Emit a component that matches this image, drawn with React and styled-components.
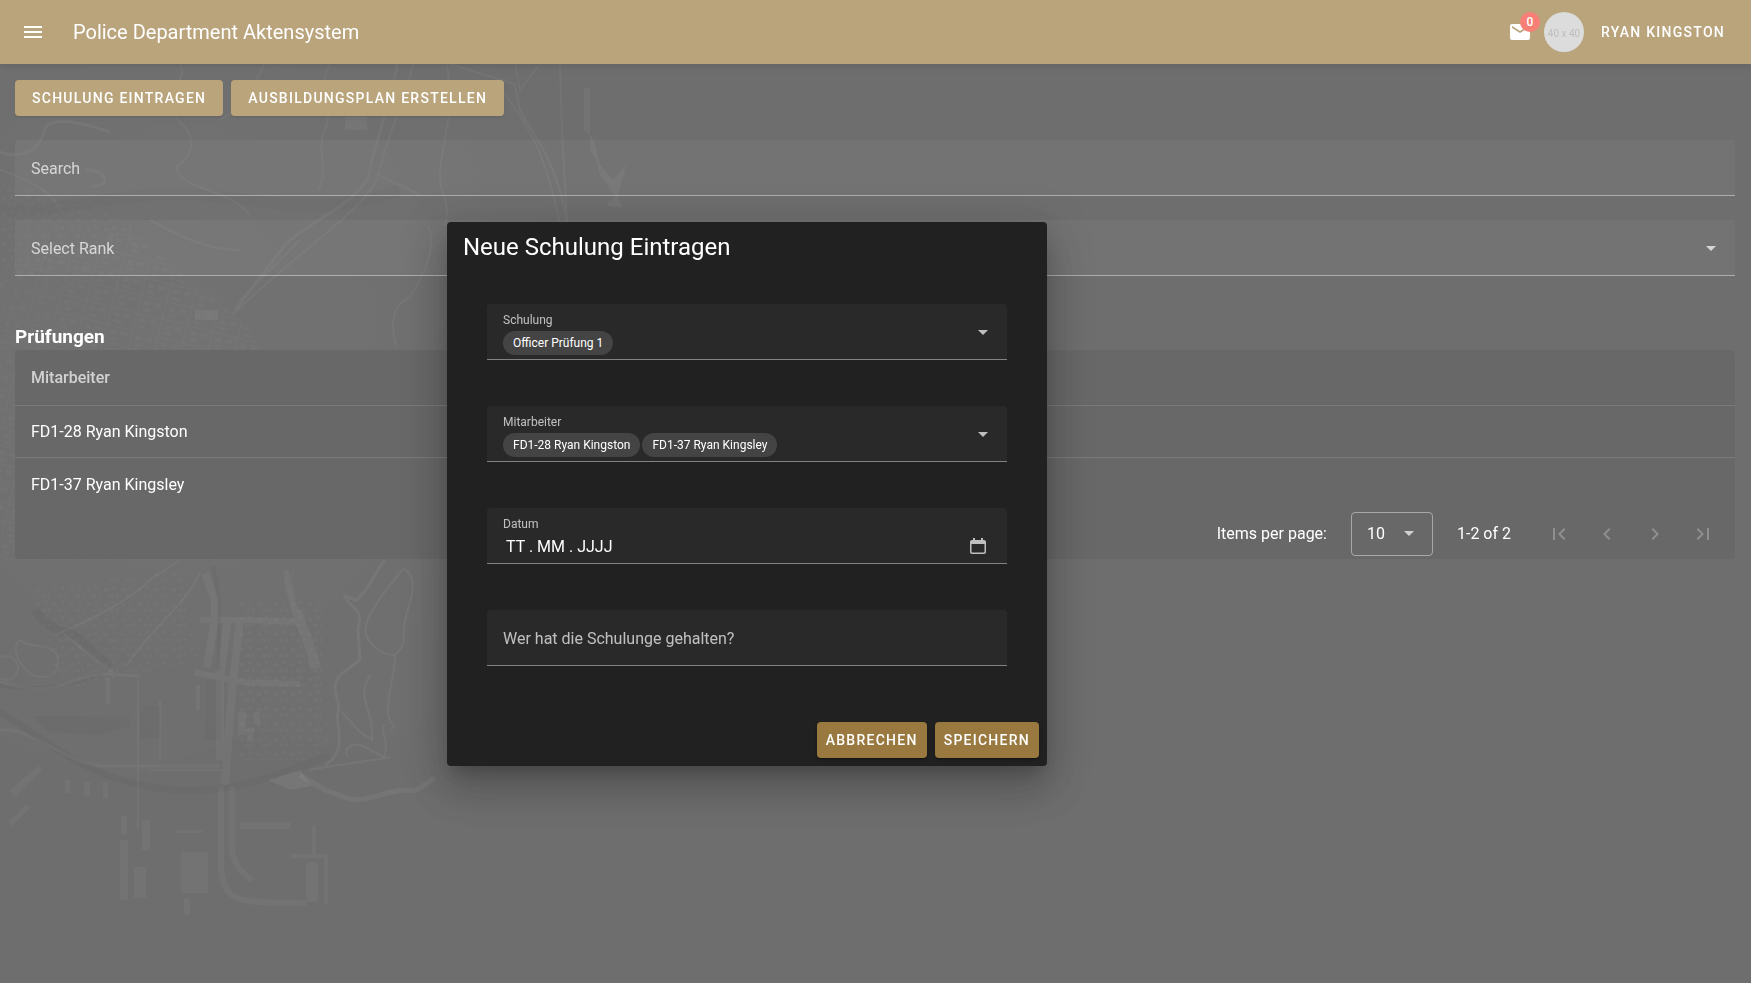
import React, { useState } from "react";
import styled, { createGlobalStyle, css } from "styled-components";

const icons = {
  menu: "M3 6H21V8H3V6M3 11H21V13H3V11M3 16H21V18H3V16Z",
  email:
    "M20 8L12 13L4 8V6L12 11L20 6M20 4H4C2.89 4 2 4.89 2 6V18A2 2 0 0 0 4 20H20A2 2 0 0 0 22 18V6C22 4.89 21.1 4 20 4Z",
  down: "M7 10L12 15L17 10H7Z",
  first:
    "M18.41 16.59L13.82 12L18.41 7.41L17 6L11 12L17 18L18.41 16.59M6 6H8V18H6V6Z",
  prev: "M15.41 16.58L10.83 12L15.41 7.41L14 6L8 12L14 18L15.41 16.58Z",
  next: "M8.59 16.58L13.17 12L8.59 7.41L10 6L16 12L10 18L8.59 16.58Z",
  last: "M5.59 7.41L10.18 12L5.59 16.59L7 18L13 12L7 6L5.59 7.41M16 6H18V18H16V6Z",
  calendar:
    "M7 4H9V6H15V4H17V6H18C19.1 6 20 6.9 20 8V18C20 19.1 19.1 20 18 20H6C4.9 20 4 19.1 4 18V8C4 6.9 4.9 6 6 6H7V4M5.5 10V18C5.5 18.3 5.7 18.5 6 18.5H18C18.3 18.5 18.5 18.3 18.5 18V10H5.5Z",
};

const Icon = ({ name }) => (
  <Svg viewBox="0 0 24 24" aria-hidden="true">
    <path d={icons[name]} fillRule="evenodd" />
  </Svg>
);

const CityMap = () => (
  <MapLayer viewBox="0 0 700 983" aria-hidden="true">
    <defs>
      <pattern
        id="blocks"
        width="26"
        height="18"
        patternUnits="userSpaceOnUse"
        patternTransform="rotate(14)"
      >
        <path d="M0 0H26M0 0V18" stroke="#fff" strokeWidth="2" opacity=".6" />
        <path d="M5 5H11V9H5ZM15 4H22V8H15ZM6 12H13V15H6Z" fill="#fff" opacity=".5" />
      </pattern>
      <pattern id="houses" width="17" height="15" patternUnits="userSpaceOnUse">
        <path d="M2 3H6V6H2ZM10 1H13V4H10ZM7 9H12V12H7ZM14 8H16V12H14Z" fill="#fff" />
      </pattern>
      <radialGradient id="fade" cx="0.3" cy="0.4" r="0.7">
        <stop offset="0" stopColor="#fff" stopOpacity=".03" />
        <stop offset="1" stopColor="#fff" stopOpacity="0" />
      </radialGradient>
    </defs>
    <path d="M0 64H590L620 190L520 225L440 330L400 500L440 560L430 770L260 730L120 780L0 740Z" fill="url(#fade)" />
    <path d="M0 270L130 230L250 330L260 350L200 560L0 560Z" fill="url(#blocks)" opacity=".04" />
    <path d="M0 180L90 200L140 230L0 275ZM30 590L180 570L200 660L60 690Z" fill="url(#houses)" opacity=".02" />
    <path d="M240 600H320L330 760H240Z" fill="url(#houses)" opacity=".025" />

    {/* rivers and shadows */}
    <g fill="none" stroke="#000" opacity=".12">
      <path d="M0 712C40 735 80 775 150 787S260 780 330 756" strokeWidth="7" />
      <path d="M36 610C44 630 70 632 78 638L110 668" strokeWidth="9" />
      <path d="M0 686C40 690 60 690 102 674" strokeWidth="4" />
      <path d="M213 566L219 600V670M290 570L300 610" strokeWidth="4" />
      <path d="M0 210C60 215 110 190 200 195S300 220 400 190" strokeWidth="12" opacity=".5" />
    </g>
    <path d="M32 716H130V726L100 735L48 732ZM140 706H160V738H140ZM205 680H222V740H205Z" fill="#000" opacity=".09" />

    {/* roads */}
    <g fill="none" stroke="#fff" opacity=".04">
      <path d="M205 573L215 600V618L207 668M228 618L220 680V760M240 620L232 690L225 785" strokeWidth="8" />
      <path d="M200 620H250L305 622M195 672L240 682L300 684" strokeWidth="6" />
      <path d="M288 570C292 610 310 640 316 668" strokeWidth="10" />
      <path d="M0 682C60 700 70 676 105 674L140 676M64 634L114 674M0 730C30 726 60 760 100 766H220" strokeWidth="3" />
      <path d="M57 634C90 620 130 600 150 580L180 560M126 666C150 630 190 600 200 572" strokeWidth="2" />
      <path d="M221 786V870C226 905 240 902 306 903M232 786V850C236 870 246 876 252 880" strokeWidth="6" />
      <path d="M138 680V830M160 700V760M150 770H226" strokeWidth="2" />
      <path d="M20 640C30 650 60 640 58 664C56 680 36 680 26 670S12 645 20 640Z" strokeWidth="2" />
      <circle cx="6" cy="668" r="12" strokeWidth="2" />
      <path d="M0 152C20 160 40 150 44 132S80 122 110 132M85 170C110 170 110 188 92 186" strokeWidth="3" />
      <path d="M398 60C390 110 375 140 370 170S310 220 285 245L235 310" strokeWidth="3" />
      <path d="M415 60C400 110 385 145 378 175S300 250 232 315" strokeWidth="2" />
      <path d="M446 60C456 110 442 145 440 170S452 200 445 225" strokeWidth="2" />
      <path d="M450 64L515 84L520 110C530 130 560 165 567 225M502 90C530 130 545 150 560 225" strokeWidth="2" />
      <path d="M560 64L562 130L567 225M515 64L520 90L540 64" strokeWidth="2" />
      <path d="M180 64C190 80 160 95 170 110S195 130 190 150S170 160 180 175S230 190 250 215" strokeWidth="2" />
      <path d="M265 64C250 90 240 110 220 120M330 64C315 90 335 110 325 130S330 170 318 190M375 173L420 195" strokeWidth="2" />
      <path d="M427 225C440 240 420 290 405 300S392 330 396 345M240 300L300 240" strokeWidth="2" />
      <path d="M150 220C170 230 200 250 240 250M0 170C30 180 50 190 60 210" strokeWidth="2" />
    </g>

    {/* golf course paths and the shore line */}
    <g fill="none" stroke="#fff" opacity=".05">
      <path d="M385 560C372 575 370 590 356 600L345 596C350 610 364 605 358 630L360 660L340 675C328 690 342 700 338 712S350 750 325 765" strokeWidth="3" />
      <path d="M404 568C420 580 410 600 405 620S410 640 395 655C380 655 362 640 366 625S385 590 404 568Z" strokeWidth="2" />
      <path d="M395 655C395 675 388 690 388 710S400 722 390 730M370 675C355 700 375 710 372 740L358 730L342 712" strokeWidth="2" />
      <path d="M348 758C340 745 360 740 370 750L384 757C390 740 380 735 384 725" strokeWidth="2" />
      <path d="M310 770C330 765 380 760 390 757" strokeWidth="2" />
      <path d="M300 775L325 790C340 795 350 802 365 799S395 788 415 791L435 778" strokeWidth="5" />
    </g>
    <path d="M268 780L300 770L312 786L290 790Z" fill="#fff" opacity=".06" />

    {/* docks and warehouses */}
    <g fill="#fff" opacity=".04">
      <path d="M121 816H127V834H121ZM120 840H128V900H120ZM134 867H146V898H134ZM142 820H150V850H142Z" />
      <path d="M181 852H208V893H181ZM184 898H190V915H184ZM176 830H202V833H176Z" />
      <path d="M240 822H290V829H240ZM312 825H316V854H312ZM290 854H328V904H324V858H290ZM306 862H318V902H306Z" />
      <path d="M106 678H110V704H106ZM196 685H200V710H196ZM238 712H246V735H238ZM247 728H254V742H247ZM254 712H260V724H254Z" />
      <path d="M10 790L38 766L42 770L14 798ZM8 822L26 804L30 808L12 826ZM65 780H70V793H65ZM84 782H90V796H84ZM103 782H108V798H103Z" />
      <path d="M345 114H367V130H345ZM195 310H218V320H195ZM584 88H590V150L600 165L594 140L584 130Z" />
      <path d="M590 130L600 165L613 180L626 165L618 195L622 208L606 205L615 196L600 175Z" />
    </g>
  </MapLayer>
);

const App = () => {
  const [search, setSearch] = useState("");
  const [rank, setRank] = useState("");
  const [trainer, setTrainer] = useState("");
  const [date, setDate] = useState("TT . MM . JJJJ");

  return (
    <Page>
      <GlobalStyle />
      <CityMap />
      <AppBar>
        <IconButton type="button" aria-label="Menu">
          <Icon name="menu" />
        </IconButton>
        <AppTitle>Police Department Aktensystem</AppTitle>
        <Mail type="button" aria-label="Mail">
          <Icon name="email" />
          <Badge>0</Badge>
        </Mail>
        <Avatar>40 x 40</Avatar>
        <UserButton type="button">Ryan Kingston</UserButton>
      </AppBar>

      <Main>
        <Actions>
          <Button type="button">Schulung eintragen</Button>
          <Button type="button">Ausbildungsplan erstellen</Button>
        </Actions>
        <Filters>
          <Field>
            <Label htmlFor="search">Search</Label>
            <Input
              id="search"
              value={search}
              onChange={(e) => setSearch(e.target.value)}
            />
          </Field>
          <Field>
            <Label htmlFor="rank">Select Rank</Label>
            <Select
              id="rank"
              value={rank}
              onChange={(e) => setRank(e.target.value)}
            >
              <option value=""></option>
            </Select>
            <Arrow>
              <Icon name="down" />
            </Arrow>
          </Field>
        </Filters>

        <Heading>Prüfungen</Heading>
        <TableCard>
          <Table>
            <thead>
              <tr>
                <th>Mitarbeiter</th>
              </tr>
            </thead>
            <tbody>
              <tr>
                <td>FD1-28 Ryan Kingston</td>
              </tr>
              <tr>
                <td>FD1-37 Ryan Kingsley</td>
              </tr>
            </tbody>
          </Table>
          <Footer>
            <label htmlFor="perPage">Items per page:</label>
            <PerPage>
              <select id="perPage" defaultValue="10">
                <option>10</option>
              </select>
              <Arrow $compact>
                <Icon name="down" />
              </Arrow>
            </PerPage>
            <Range>1-2 of 2</Range>
            {["first", "prev", "next", "last"].map((name) => (
              <PageButton type="button" disabled aria-label={name} key={name}>
                <Icon name={name} />
              </PageButton>
            ))}
          </Footer>
        </TableCard>
      </Main>

      <Overlay>
        <Dialog role="dialog" aria-labelledby="dialogTitle">
          <DialogTitle id="dialogTitle">Neue Schulung Eintragen</DialogTitle>
          <DialogBody>
            <Field>
              <Label htmlFor="training" $floating>
                Schulung
              </Label>
              <Chips>
                <Chip>Officer Prüfung 1</Chip>
              </Chips>
              <Select id="training" $hidden />
              <Arrow>
                <Icon name="down" />
              </Arrow>
            </Field>
            <Field>
              <Label htmlFor="employees" $floating>
                Mitarbeiter
              </Label>
              <Chips>
                <Chip>FD1-28 Ryan Kingston</Chip>
                <Chip>FD1-37 Ryan Kingsley</Chip>
              </Chips>
              <Select id="employees" $hidden />
              <Arrow>
                <Icon name="down" />
              </Arrow>
            </Field>
            <Field>
              <Label htmlFor="date" $floating>
                Datum
              </Label>
              <Input
                id="date"
                $date
                value={date}
                onChange={(e) => setDate(e.target.value)}
              />
              <DateButton type="button" aria-label="Kalender">
                <Icon name="calendar" />
              </DateButton>
            </Field>
            <Field>
              <Label htmlFor="trainer">Wer hat die Schulunge gehalten?</Label>
              <Input
                id="trainer"
                value={trainer}
                onChange={(e) => setTrainer(e.target.value)}
              />
            </Field>
          </DialogBody>
          <DialogActions>
            <Button type="button" $small>
              Abbrechen
            </Button>
            <Button type="button" $small>
              Speichern
            </Button>
          </DialogActions>
        </Dialog>
      </Overlay>
    </Page>
  );
};

const GlobalStyle = createGlobalStyle`
  * {
    box-sizing: border-box;
  }
  body {
    margin: 0;
    background: #2a2a2a;
    color: #fff;
    font: 16px/24px Roboto, sans-serif;
  }
  button, input, select {
    font: inherit;
    color: inherit;
    border: none;
    background: none;
    outline: none;
    margin: 0;
    padding: 0;
  }
`;

const Page = styled.div`
  position: relative;
  min-height: 100vh;
  overflow: hidden;
`;

const MapLayer = styled.svg`
  position: absolute;
  top: 0;
  left: 0;
  width: 700px;
  height: 983px;
`;

const Svg = styled.svg`
  display: block;
  width: 24px;
  height: 24px;
  fill: currentColor;
`;

const AppBar = styled.header`
  position: relative;
  display: flex;
  align-items: center;
  height: 64px;
  padding: 0 9px;
  background: #99793f;
  box-shadow: 0 2px 4px -1px rgba(0, 0, 0, 0.2), 0 4px 5px rgba(0, 0, 0, 0.14),
    0 1px 10px rgba(0, 0, 0, 0.12);
`;

const IconButton = styled.button`
  display: flex;
  align-items: center;
  justify-content: center;
  width: 48px;
  height: 48px;
`;

const AppTitle = styled.div`
  flex: 1;
  margin-left: 16px;
  font-size: 20px;
`;

const Mail = styled.button`
  position: relative;
  margin-right: 12px;
`;

const Badge = styled.span`
  position: absolute;
  left: 12px;
  bottom: 12px;
  min-width: 20px;
  height: 20px;
  border-radius: 10px;
  background: #f44336;
  font-size: 12px;
  font-weight: 500;
  line-height: 20px;
`;

const Avatar = styled.div`
  width: 40px;
  height: 40px;
  border-radius: 50%;
  background: #ccc;
  color: #a0a0a0;
  font-size: 10px;
  line-height: 44px;
  text-align: center;
`;

const Button = styled.button`
  height: 36px;
  padding: 0 ${({ $small }) => ($small ? "9px" : "17px")};
  border-radius: 4px;
  background: #99793f;
  box-shadow: 0 3px 1px -2px rgba(0, 0, 0, 0.2), 0 2px 2px rgba(0, 0, 0, 0.14),
    0 1px 5px rgba(0, 0, 0, 0.12);
  font-size: 14px;
  font-weight: 500;
  letter-spacing: 0.09em;
  text-transform: uppercase;
`;

const UserButton = styled(Button)`
  background: none;
  box-shadow: none;
`;

const Main = styled.main`
  position: relative;
  padding: 16px 16px 0 15px;
`;

const Actions = styled.div`
  display: flex;
  gap: 8px;
`;

const Filters = styled.div`
  display: grid;
  gap: 24px;
  margin-top: 24px;
`;

const Field = styled.div`
  position: relative;
  height: 56px;
  border-bottom: 1px solid rgba(255, 255, 255, 0.42);
  border-radius: 4px 4px 0 0;
  background: rgba(255, 255, 255, 0.04);
`;

const Label = styled.label`
  position: absolute;
  left: 16px;
  top: 17px;
  color: rgba(255, 255, 255, 0.7);
  pointer-events: none;
  ${({ $floating }) =>
    $floating &&
    css`
      top: 8px;
      font-size: 12px;
      line-height: 16px;
    `}
`;

const Input = styled.input`
  width: 100%;
  height: 100%;
  padding: ${({ $date }) => ($date ? "22px 64px 0 19px" : "16px")};
`;

const Select = styled.select`
  appearance: none;
  width: 100%;
  height: 100%;
  padding: 16px;
  opacity: ${({ $hidden }) => ($hidden ? 0 : 1)};
`;

const Arrow = styled.span`
  position: absolute;
  right: 12px;
  top: 16px;
  color: rgba(255, 255, 255, 0.7);
  pointer-events: none;
  ${({ $compact }) =>
    $compact &&
    css`
      right: 11px;
      top: 8px;
    `}
`;

const Chips = styled.div`
  position: absolute;
  left: 16px;
  bottom: 4px;
  display: flex;
  gap: 2px;
`;

const Chip = styled.span`
  height: 24px;
  padding: 0 10px;
  border-radius: 12px;
  background: #444;
  font-size: 12px;
  line-height: 24px;
`;

const DateButton = styled(IconButton)`
  position: absolute;
  right: 17px;
  top: 26px;
  width: 24px;
  height: 24px;
  color: rgba(255, 255, 255, 0.7);
`;

const Heading = styled.h1`
  margin: 48px 0 0;
  font-size: 19px;
  font-weight: 700;
  line-height: 26px;
`;

const TableCard = styled.div`
  border-radius: 4px;
  background: #212121;
`;

const Table = styled.table`
  width: 100%;
  border-spacing: 0;
  th,
  td {
    height: 52px;
    padding: 0 16px;
    text-align: left;
  }
  th {
    height: 56px;
    border-bottom: 1px solid rgba(255, 255, 255, 0.12);
    color: rgba(255, 255, 255, 0.7);
    font-weight: 500;
  }
  tr:not(:last-child) td {
    border-bottom: 1px solid rgba(255, 255, 255, 0.12);
  }
  tbody tr:last-child td {
    height: 53px;
  }
`;

const Footer = styled.div`
  display: flex;
  align-items: center;
  justify-content: flex-end;
  height: 48px;
  padding: 0 8px 2px 0;
`;

const PerPage = styled.div`
  position: relative;
  width: 82px;
  height: 44px;
  margin: 0 24px;
  border: 1px solid rgba(255, 255, 255, 0.42);
  border-radius: 4px;
  select {
    appearance: none;
    width: 100%;
    height: 100%;
    padding-left: 15px;
  }
`;

const Range = styled.div`
  margin-right: 24px;
`;

const PageButton = styled(IconButton)`
  color: rgba(255, 255, 255, 0.26);
`;

const Overlay = styled.div`
  position: fixed;
  inset: 0;
  display: flex;
  align-items: center;
  justify-content: center;
  padding: 5px 257px 0 0;
  background: rgba(255, 255, 255, 0.32);
`;

const Dialog = styled.div`
  width: 600px;
  border-radius: 4px;
  background: #212121;
  box-shadow: 0 11px 15px -7px rgba(0, 0, 0, 0.2),
    0 24px 38px 3px rgba(0, 0, 0, 0.14), 0 9px 46px 8px rgba(0, 0, 0, 0.12);
`;

const DialogTitle = styled.h2`
  margin: 0;
  padding: 8px 16px;
  font-size: 24px;
  font-weight: 400;
  line-height: 34px;
`;

const DialogBody = styled.div`
  display: grid;
  gap: 46px;
  padding: 32px 40px 56px;
`;

const DialogActions = styled.div`
  display: flex;
  justify-content: flex-end;
  gap: 8px;
  padding: 0 8px 8px;
`;

export default App;
